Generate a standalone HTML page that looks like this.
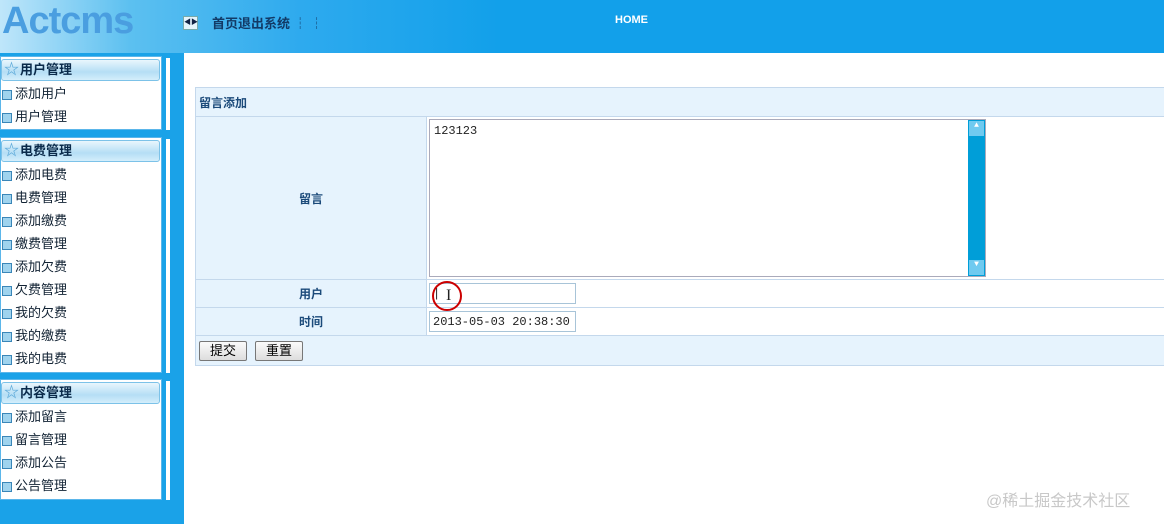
<!DOCTYPE html><html><head><meta charset="utf-8"><style>
*{margin:0;padding:0;box-sizing:border-box}
body{width:1164px;height:524px;overflow:hidden;font:12px "Liberation Sans","Noto Sans CJK SC",sans-serif;background:#fff;position:relative}
.hd{position:absolute;left:0;top:0;width:1164px;height:53px;background:linear-gradient(90deg,#bfe6fa 0,#5cc0f0 130px,#2eaaee 300px,#12a0ea 500px,#12a0ea 1164px)}
.logo{position:absolute;left:2px;top:0px;font:bold 38px "Liberation Sans",sans-serif;color:#4a9ee0;letter-spacing:-1px}
.nav{position:absolute;left:212px;top:13px;font-size:13px;font-weight:bold;color:#123a66}
.arr{position:absolute;left:183px;top:16px;width:15px;height:14px;border:1px solid #7aa;background:#e4f4fc;font-size:7px;line-height:12px;text-align:center;color:#124}
.home{position:absolute;left:615px;top:14px;color:#fff;font-weight:bold;font-size:11px}
.sb{position:absolute;left:0;top:53px;width:184px;height:471px;background:#1aa2e8}
.pn{position:absolute;left:0;width:162px;background:#fff;border:1px solid #5bb6ea}
.bar{position:absolute;left:166px;width:4px;background:#fff}
.tt{height:22px;margin:2px 1px 4px 0;border:1px solid #7cc2e8;border-radius:3px;background:linear-gradient(#e9f6fd,#b5def5 60%,#d4eefb);font-weight:bold;font-size:13px;color:#0a2a4a;line-height:20px;padding-left:18px;position:relative}
.tt:before{content:"☆";position:absolute;left:2px;top:0;color:#5aa8d8;font-size:15px}
.it{height:23px;line-height:18px;font-size:13px;color:#123;padding-left:14px;position:relative}
.it:before{content:"";position:absolute;left:1px;top:5px;width:8px;height:8px;border:1px solid #3a86b8;background:#9fd3ee}
table{position:absolute;left:195px;top:87px;width:975px;border-collapse:collapse}
td{border:1px solid #c4d8ec}
.l{background:#e6f3fd;text-align:center;font-weight:bold;color:#1b4a7a;font-size:12px}
.in{border:1px solid #a8c4d8;height:21px;width:147px;font:12px "Liberation Mono","DejaVu Sans Mono",monospace;padding:3px;color:#222}
.btn{display:inline-block;height:20px;border:1px solid #777;border-radius:2px;background:linear-gradient(#fbfbfb,#ddd);font-size:13px;padding:0 10px;line-height:18px;margin-right:8px}
</style></head><body>
<div class="hd"><div class="logo">Actcms</div><div class="arr">◀▶</div><div class="nav">首页退出系统 ┆ ┆</div><div class="home">HOME</div></div>
<div class="sb">
<div class="pn" style="top:3px;height:74px"><div class="tt">用户管理</div><div class="it">添加用户</div><div class="it">用户管理</div></div>
<div class="bar" style="top:5px;height:72px"></div>
<div class="pn" style="top:84px;height:236px"><div class="tt">电费管理</div><div class="it">添加电费</div><div class="it">电费管理</div><div class="it">添加缴费</div><div class="it">缴费管理</div><div class="it">添加欠费</div><div class="it">欠费管理</div><div class="it">我的欠费</div><div class="it">我的缴费</div><div class="it">我的电费</div></div>
<div class="bar" style="top:86px;height:234px"></div>
<div class="pn" style="top:326px;height:121px"><div class="tt">内容管理</div><div class="it">添加留言</div><div class="it">留言管理</div><div class="it">添加公告</div><div class="it">公告管理</div></div>
<div class="bar" style="top:328px;height:119px"></div>
</div>
<table>
<tr><td colspan="2" style="height:29px;background:#e6f3fd;font-weight:bold;color:#1b4a7a;padding-left:3px">留言添加</td></tr>
<tr><td class="l" style="width:231px;height:163px">留言</td><td style="padding:2px"><div style="width:557px;height:158px;border:1px solid #aab;position:relative;font:12px 'Liberation Mono',monospace;padding:4px;color:#222">123123<div style="position:absolute;right:0;top:0;width:17px;height:156px;background:#009ed8"><div style="height:15px;margin:1px;background:#6fcaf0;color:#fff;font-size:8px;text-align:center">▲</div><div style="position:absolute;bottom:1px;left:1px;width:15px;height:15px;background:#6fcaf0;color:#fff;font-size:8px;text-align:center">▼</div></div></div></td></tr>
<tr><td class="l" style="height:28px">用户</td><td style="padding:0 2px"><div class="in">|</div></td></tr>
<tr><td class="l" style="height:28px">时间</td><td style="padding:0 2px"><div class="in">2013-05-03 20:38:30</div></td></tr>
<tr><td colspan="2" style="height:30px;background:#e6f3fd;padding-left:3px"><span class="btn">提交</span><span class="btn">重置</span></td></tr>
</table>
<div style="position:absolute;left:432px;top:281px;width:30px;height:30px;border:2px solid #c00;border-radius:50%"></div>
<div style="position:absolute;left:446px;top:287px;font:16px 'Liberation Serif',serif;color:#222">I</div>
<div style="position:absolute;left:986px;top:487px;color:#c8c8c8;font-size:16px">@稀土掘金技术社区</div>
</body></html>
